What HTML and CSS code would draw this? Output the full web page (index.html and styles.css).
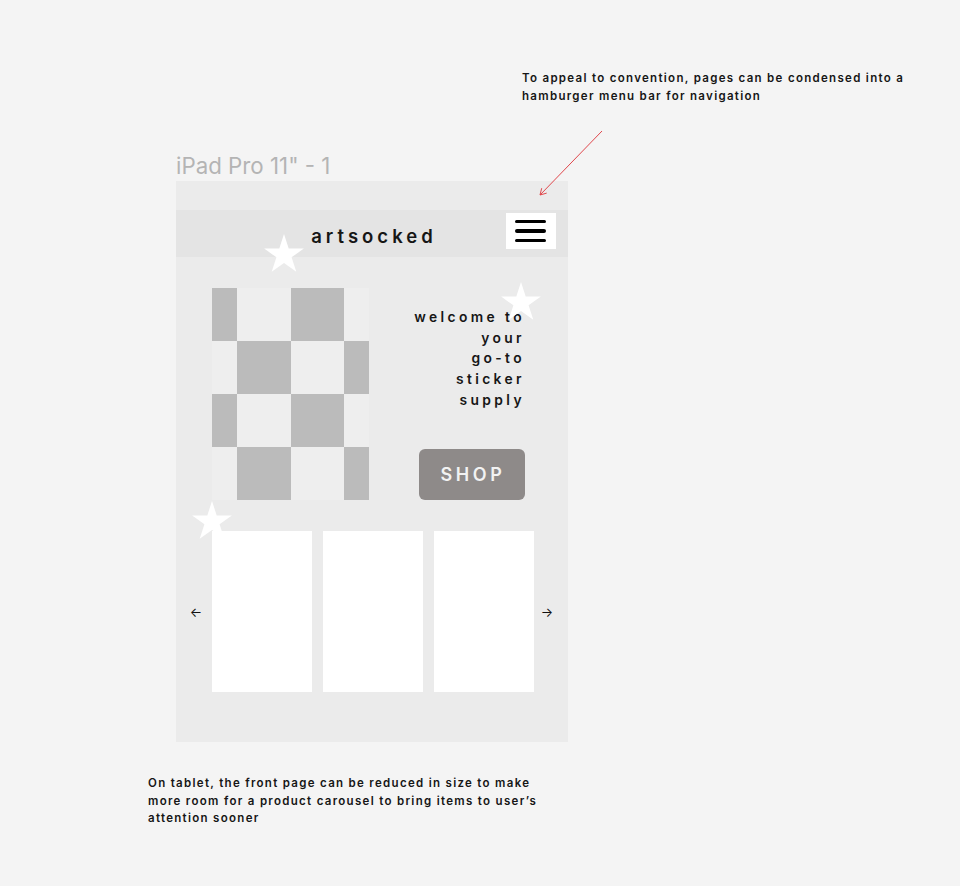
FILE: index.html
```html
<!DOCTYPE html>
<html lang="en">
<head>
    <meta charset="UTF-8">
    <meta name="viewport" content="width=device-width, initial-scale=1.0">
    <title>artsocked - tablet wireframe</title>
    <link rel="stylesheet" href="styles.css">
</head>
<body>
    <div class="board">
        <p class="note note-top">To appeal to convention, pages can be condensed into a hamburger menu bar for navigation</p>

        <div class="label">iPad Pro 11" - 1</div>
        <div class="frame">
            <header class="topbar">
                <h1 class="logo">artsocked</h1>
                <button class="burger" aria-label="Menu"><span></span><span></span><span></span></button>
            </header>

            <section class="hero">
                <div class="checker">
                    <div class="sq dark"></div><div class="sq"></div><div class="sq dark"></div><div class="sq"></div>
                    <div class="sq"></div><div class="sq dark"></div><div class="sq"></div><div class="sq dark"></div>
                    <div class="sq dark"></div><div class="sq"></div><div class="sq dark"></div><div class="sq"></div>
                    <div class="sq"></div><div class="sq dark"></div><div class="sq"></div><div class="sq dark"></div>
                </div>
                <div class="intro">
                    <p class="welcome">welcome to<br>your<br>go-to<br>sticker<br>supply</p>
                    <button class="shop">SHOP</button>
                </div>
            </section>

            <section class="carousel">
                <div class="arrow arrow-left">&larr;</div>
                <div class="cards">
                    <div class="card"></div>
                    <div class="card"></div>
                    <div class="card"></div>
                </div>
                <div class="arrow arrow-right">&rarr;</div>
            </section>

            <!-- decorative stars -->
            <svg class="star star-1" viewBox="0 0 44 40"><polygon points="22,0 26.94,15.2 42.92,15.2 29.99,24.6 34.93,39.8 22,30.4 9.07,39.8 14.01,24.6 1.08,15.2 17.06,15.2"/></svg>
            <svg class="star star-2" viewBox="0 0 44 40"><polygon points="22,0 26.94,15.2 42.92,15.2 29.99,24.6 34.93,39.8 22,30.4 9.07,39.8 14.01,24.6 1.08,15.2 17.06,15.2"/></svg>
            <svg class="star star-3" viewBox="0 0 44 40"><polygon points="22,0 26.94,15.2 42.92,15.2 29.99,24.6 34.93,39.8 22,30.4 9.07,39.8 14.01,24.6 1.08,15.2 17.06,15.2"/></svg>
        </div>

        <p class="note note-bottom">On tablet, the front page can be reduced in size to make more room for a product carousel to bring items to user’s attention sooner</p>

        <svg class="pointer" width="960" height="886" viewBox="0 0 960 886">
            <path d="M602 131 L540 195 M546.7 193.1 L540 195 L541.7 188.2" fill="none" stroke="#e0474c" stroke-width="1"/>
        </svg>
    </div>
</body>
</html>
```

FILE: styles.css
```css
body {
    margin: 0;
    background-color: #f4f4f4;
    color: #161616;
    font-family: Inter, "Noto Sans", Arial, sans-serif;
}
.board {
    position: relative;
    height: 886px;
    padding-top: 69px;
    box-sizing: border-box;
}
.note {
    margin: 0;
    font-size: 11.5px;
    font-weight: 600;
    line-height: 18px;
    letter-spacing: 1.3px;
}
.note-top {
    margin-left: 522px;
    width: 420px;
}
.note-bottom {
    margin: 33px 0 0 148px;
    width: 395px;
    line-height: 17.5px;
}
.label {
    margin: 48px 0 2px 176px;
    font-size: 22.3px;
    line-height: 26px;
    color: #b4b4b4;
    font-weight: 400;
}

/* the artboard */
.frame {
    position: relative;
    width: 392px;
    height: 561px;
    margin-left: 176px;
    padding-top: 29px;
    box-sizing: border-box;
    background-color: #ebebeb;
}
.topbar {
    display: grid;
    grid-template-columns: 1fr auto 1fr;
    height: 47px;
    background-color: #e4e4e4;
}
.logo {
    grid-column: 2;
    align-self: center;
    margin: 5px 0 0 4px;
    font-size: 18.5px;
    font-weight: 600;
    letter-spacing: 4px;
}
.burger {
    grid-column: 3;
    justify-self: end;
    align-self: start;
    display: flex;
    flex-direction: column;
    justify-content: center;
    gap: 6px;
    width: 50px;
    height: 36px;
    margin: 3px 12px 0 0;
    padding: 0 0 0 9px;
    border: none;
    background-color: #ffffff;
}
.burger span {
    display: block;
    width: 31px;
    height: 3.5px;
    border-radius: 2px;
    background-color: #000000;
}

.hero {
    display: flex;
    justify-content: space-between;
    padding: 31px 43px 0 36px;
}
.checker {
    display: grid;
    grid-template-columns: 25px 54px 53px 25px;
    grid-template-rows: repeat(4, 53px);
}
.sq {
    background-color: #eeeeee;
}
.sq.dark {
    background-color: #bbbbbb;
}
.intro {
    display: flex;
    flex-direction: column;
    align-items: flex-end;
}
.welcome {
    margin: 19px 0 0 0;
    text-align: right;
    font-size: 13.8px;
    font-weight: 600;
    line-height: 20.7px;
    letter-spacing: 3.4px;
}
.shop {
    width: 106px;
    height: 51px;
    margin-top: 38px;
    border: none;
    border-radius: 6px;
    background-color: #8e8a89;
    color: #f2f2f2;
    font-family: Inter, "Noto Sans", Arial, sans-serif;
    font-size: 18px;
    font-weight: 600;
    letter-spacing: 3.6px;
    padding-left: 8px;
}

.carousel {
    display: flex;
    align-items: center;
    margin-top: 31px;
}
.arrow {
    font-size: 13px;
    text-align: center;
    color: #111111;
}
.arrow-left {
    width: 32px;
    padding-left: 4px;
}
.arrow-right {
    width: 26px;
}
.cards {
    display: flex;
    gap: 11px;
}
.card {
    width: 100px;
    height: 161px;
    background-color: #ffffff;
}

.star {
    position: absolute;
    width: 42px;
    height: 38px;
    fill: #ffffff;
}
.star-1 { left: 87px; top: 53px; }
.star-2 { left: 324px; top: 101px; }
.star-3 { left: 15px; top: 320px; }

.pointer {
    position: absolute;
    left: 0;
    top: 0;
    pointer-events: none;
}
```
